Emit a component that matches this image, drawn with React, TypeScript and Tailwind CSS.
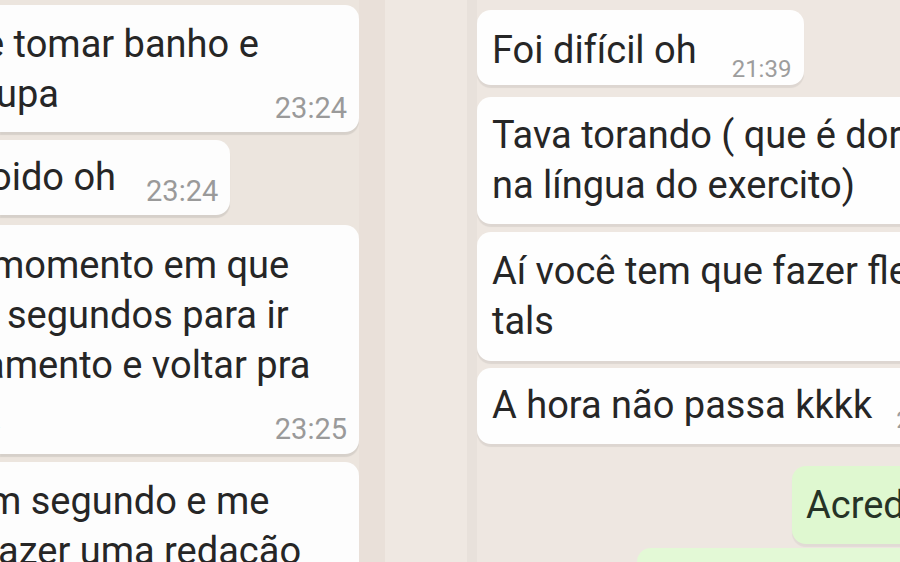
type Line = { t: string; ml: number };

const font = "font-['Roboto','Liberation_Sans',sans-serif]";

function LeftBubble({ lines, time, className }: { lines: Line[]; time?: string; className: string }) {
  const last = lines.length - 1;
  return (
    <div className={`bg-[#fdfdfd] rounded-r-[14px] shadow-[0_3px_1px_rgba(0,0,0,0.09)] ${className}`}>
      {lines.map((l, i) =>
        i === last && time ? (
          <div key={i} className="flex items-end">
            <span className="whitespace-pre leading-[50px]" style={{ marginLeft: l.ml }}>{l.t}</span>
            <span className="ml-auto pl-[30px] text-[29px] leading-none text-[#9a9a9a] -mb-[4px]">{time}</span>
          </div>
        ) : (
          <div key={i} className="whitespace-pre leading-[50px]" style={{ marginLeft: l.ml }}>{l.t}</div>
        )
      )}
    </div>
  );
}

export default function App() {
  return (
    <div className={`flex w-[900px] h-[562px] overflow-hidden bg-[#eee7e1] text-[38px] text-[#262626] ${font}`}>
      {/* left screenshot */}
      <div className="w-[359px] shrink-0 flex flex-col overflow-hidden bg-[#ece5de]">
        <div className="w-[120px] h-[3px] bg-[#f7f5f3] rounded-br-[6px]" />
        <LeftBubble
          className="mt-[5px] pt-[14px] pb-[13px] pr-[12px]"
          lines={[{ t: "e tomar banho e", ml: -16 }, { t: "upa", ml: -4 }]}
          time="23:24"
        />
        <LeftBubble
          className="mt-[8px] pt-[12px] pb-[13px] pr-[12px] self-start"
          lines={[{ t: "oido oh", ml: -10 }]}
          time="23:24"
        />
        <LeftBubble
          className="mt-[10px] pt-[15px] pb-[14px] pr-[12px]"
          lines={[
            { t: "momento em que", ml: -9 },
            { t: "segundos para ir", ml: 7 },
            { t: "amento e voltar pra", ml: -16 },
            { t: "a", ml: -19 },
          ]}
          time="23:25"
        />
        <LeftBubble
          className="mt-[8px] pt-[14px] flex-1"
          lines={[{ t: "m segundo e me", ml: -12 }, { t: "azer uma redação", ml: -2 }]}
        />
      </div>

      {/* gap between screenshots */}
      <div className="w-[26px] shrink-0 bg-[#e9e0d9]" />
      <div className="w-[82px] shrink-0 bg-[#efe8e2]" />
      <div className="w-[10px] shrink-0 bg-[#e8e1db]" />

      {/* right screenshot */}
      <div className="flex-1 flex flex-col items-start overflow-hidden bg-[#eee7e1]">
        <div className="mt-[10px] bg-[#fefefe] rounded-[14px] pl-[15px] pr-[13px] pt-[15px] pb-[10px] shadow-[0_3px_1px_rgba(0,0,0,0.07)] flex items-end">
          <span className="whitespace-pre leading-[50px]">Foi difícil oh</span>
          <span className="ml-[35px] text-[24px] leading-none text-[#9d9d9d] -mb-[6px]">21:39</span>
        </div>
        <div className="mt-[12px] w-[520px] bg-[#fefefe] rounded-l-[14px] pl-[15px] pt-[13px] pb-[14px] shadow-[0_3px_1px_rgba(0,0,0,0.07)]">
          <div className="whitespace-nowrap leading-[50px]">Tava torando ( que é dormir</div>
          <div className="whitespace-nowrap leading-[50px]">na língua do exercito)</div>
        </div>
        <div className="mt-[8px] w-[520px] bg-[#fefefe] rounded-l-[14px] pl-[15px] pt-[14px] pb-[15px] shadow-[0_3px_1px_rgba(0,0,0,0.07)]">
          <div className="whitespace-nowrap leading-[50px]">Aí você tem que fazer flexão e</div>
          <div className="whitespace-nowrap leading-[50px]">tals</div>
        </div>
        <div className="mt-[7px] w-[520px] bg-[#fefefe] rounded-l-[14px] pl-[15px] pt-[12px] pb-[14px] shadow-[0_3px_1px_rgba(0,0,0,0.07)] flex items-end">
          <span className="whitespace-nowrap leading-[50px]">A hora não passa kkkk</span>
          <span className="ml-[24px] text-[24px] leading-none text-[#9d9d9d] -mb-[2px]">21:40</span>
        </div>
        <div className="mt-[22px] ml-[315px] w-[200px] bg-[#dff8d0] rounded-l-[14px] pl-[14px] pt-[14px] pb-[14px] shadow-[0_3px_1px_rgba(0,0,0,0.05)]">
          <div className="whitespace-nowrap leading-[50px] text-[#263326]">Acredito</div>
        </div>
        <div className="mt-[4px] ml-[160px] w-[400px] flex-1 bg-[#e3f9d6] rounded-tl-[14px]" />
      </div>
    </div>
  );
}
